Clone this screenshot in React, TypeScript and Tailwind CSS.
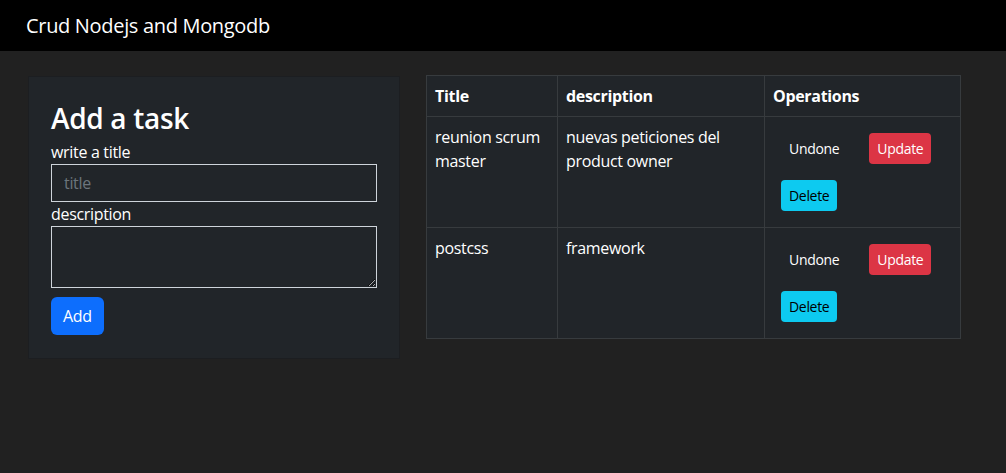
import React from "react";

type Task = { title: string; description: string; done: boolean };

const tasks: Task[] = [
  { title: "reunion scrum master", description: "nuevas peticiones del product owner", done: false },
  { title: "postcss", description: "framework", done: false },
];

function TaskForm() {
  return (
    <form className="mt-px w-[372px] shrink-0 border border-[#1c1e21] bg-[#212529] px-[22px] pt-[24px] pb-[23px]">
      <h3 className="mb-[5px] text-[28px] leading-[34px] font-semibold text-white">Add a task</h3>
      <label className="block text-base leading-6 text-white">write a title</label>
      <input
        type="text"
        placeholder="title"
        className="block h-[38px] w-full border border-[#ced4da] bg-transparent px-3 py-1.5 text-base text-white placeholder:text-[#6c757d] outline-none"
      />
      <label className="block text-base leading-6 text-white">description</label>
      <textarea
        rows={2}
        className="block h-[62px] w-full border border-[#ced4da] bg-transparent px-3 py-1.5 text-base text-white outline-none"
      />
      <button
        type="button"
        className="mt-[9px] h-[38px] rounded-md bg-[#0d6efd] px-3 text-base text-white"
      >
        Add
      </button>
    </form>
  );
}

function TaskTable() {
  return (
    <table className="w-[535px] shrink-0 table-fixed border-collapse bg-[#212529] text-base leading-6 text-white">
      <thead>
        <tr>
          <th className="w-[131px] border border-[#373b3e] p-2 text-left font-bold">Title</th>
          <th className="w-[207px] border border-[#373b3e] p-2 text-left font-bold">description</th>
          <th className="border border-[#373b3e] p-2 text-left font-bold">Operations</th>
        </tr>
      </thead>
      <tbody>
        {tasks.map((t, i) => (
          <tr key={i}>
            <td className="border border-[#373b3e] p-2 align-top">{t.title}</td>
            <td className="border border-[#373b3e] p-2 align-top">{t.description}</td>
            <td className="border border-[#373b3e] p-2 align-top">
              <div className="flex flex-wrap gap-x-[6px]">
                <button className="m-2 h-[31px] rounded px-2 text-sm text-white">
                  {t.done ? "Done" : "Undone"}
                </button>
                <button className="m-2 h-[31px] rounded bg-[#dc3545] px-2 text-sm text-white">
                  Update
                </button>
                <button className="m-2 h-[31px] rounded bg-[#0dcaf0] px-2 text-sm text-black">
                  Delete
                </button>
              </div>
            </td>
          </tr>
        ))}
      </tbody>
    </table>
  );
}

export default function App() {
  return (
    <div className="min-h-[473px] bg-[#212121] font-['Open_Sans',sans-serif] tracking-[-0.02em]">
      <nav className="flex h-[51px] items-center bg-black px-[26px]">
        <span className="text-xl text-white">Crud Nodejs and Mongodb</span>
      </nav>
      <div className="flex items-start gap-[26px] pt-6 pl-[28px]">
        <TaskForm />
        <TaskTable />
      </div>
    </div>
  );
}
